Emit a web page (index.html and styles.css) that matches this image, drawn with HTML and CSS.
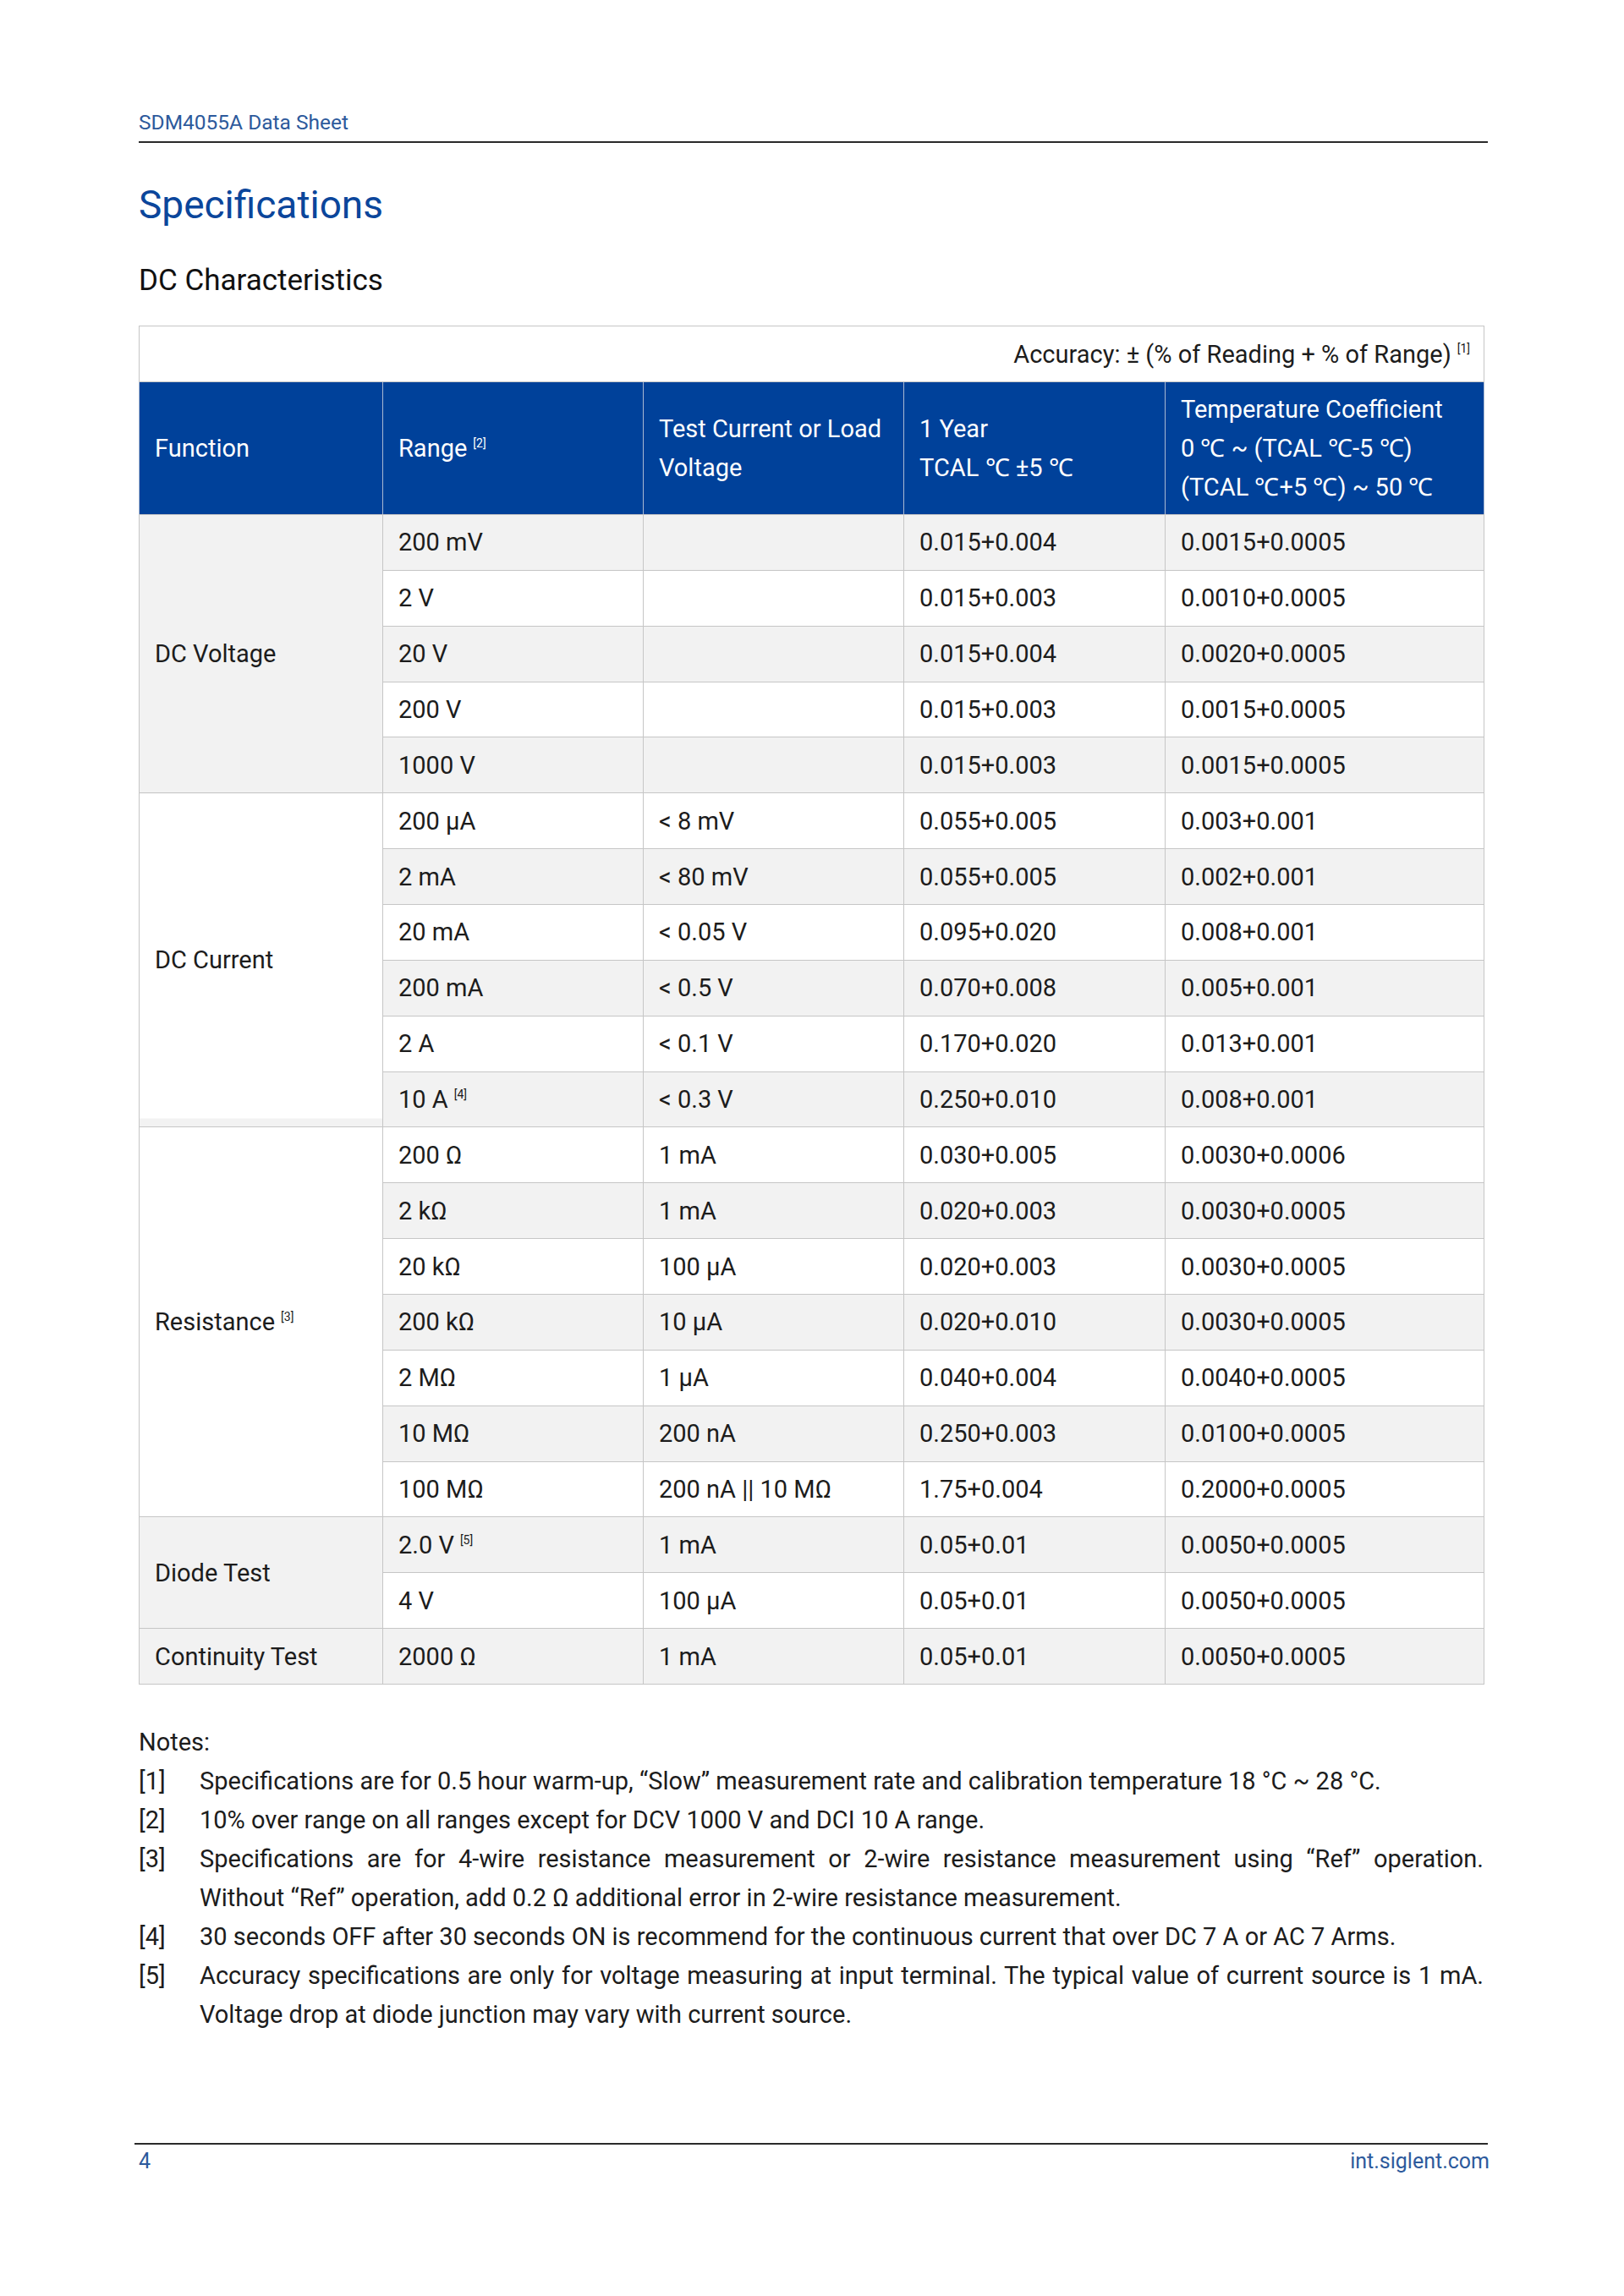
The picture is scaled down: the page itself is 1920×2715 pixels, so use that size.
FILE: index.html
```html
<!DOCTYPE html>
<html lang="en">
<head>
<meta charset="utf-8">
<title>SDM4055A Data Sheet - Specifications</title>
<link rel="stylesheet" href="styles.css">
</head>
<body>
<div class="page">
  <header class="running-head">
    <div class="running-title">SDM4055A Data Sheet</div>
    <div class="rule"></div>
  </header>

  <h1 class="title">Specifications</h1>
  <h2 class="subtitle">DC Characteristics</h2>

  <table class="spec">
    <colgroup>
      <col class="c1"><col class="c2"><col class="c3"><col class="c4"><col class="c5">
    </colgroup>
    <thead>
      <tr class="acc"><td colspan="5">Accuracy: ± (% of Reading + % of Range)<sup>[1]</sup></td></tr>
      <tr class="head">
        <th>Function</th>
        <th>Range<sup>[2]</sup></th>
        <th>Test Current or Load<br>Voltage</th>
        <th>1 Year<br>TCAL ℃ ±5 ℃</th>
        <th>Temperature Coefficient<br>0 ℃ ~ (TCAL ℃-5 ℃)<br>(TCAL ℃+5 ℃) ~ 50 ℃</th>
      </tr>
    </thead>
    <tbody>
      <tr class="g"><td rowspan="5" class="fn g">DC Voltage</td><td>200 mV</td><td></td><td>0.015+0.004</td><td>0.0015+0.0005</td></tr>
      <tr><td>2 V</td><td></td><td>0.015+0.003</td><td>0.0010+0.0005</td></tr>
      <tr class="g"><td>20 V</td><td></td><td>0.015+0.004</td><td>0.0020+0.0005</td></tr>
      <tr><td>200 V</td><td></td><td>0.015+0.003</td><td>0.0015+0.0005</td></tr>
      <tr class="g"><td>1000 V</td><td></td><td>0.015+0.003</td><td>0.0015+0.0005</td></tr>

      <tr><td rowspan="6" class="fn w strip">DC Current</td><td>200 µA</td><td>&lt; 8 mV</td><td>0.055+0.005</td><td>0.003+0.001</td></tr>
      <tr class="g"><td>2 mA</td><td>&lt; 80 mV</td><td>0.055+0.005</td><td>0.002+0.001</td></tr>
      <tr><td>20 mA</td><td>&lt; 0.05 V</td><td>0.095+0.020</td><td>0.008+0.001</td></tr>
      <tr class="g"><td>200 mA</td><td>&lt; 0.5 V</td><td>0.070+0.008</td><td>0.005+0.001</td></tr>
      <tr><td>2 A</td><td>&lt; 0.1 V</td><td>0.170+0.020</td><td>0.013+0.001</td></tr>
      <tr class="g"><td>10 A<sup>[4]</sup></td><td>&lt; 0.3 V</td><td>0.250+0.010</td><td>0.008+0.001</td></tr>

      <tr><td rowspan="7" class="fn w">Resistance<sup>[3]</sup></td><td>200 Ω</td><td>1 mA</td><td>0.030+0.005</td><td>0.0030+0.0006</td></tr>
      <tr class="g"><td>2 kΩ</td><td>1 mA</td><td>0.020+0.003</td><td>0.0030+0.0005</td></tr>
      <tr><td>20 kΩ</td><td>100 µA</td><td>0.020+0.003</td><td>0.0030+0.0005</td></tr>
      <tr class="g"><td>200 kΩ</td><td>10 µA</td><td>0.020+0.010</td><td>0.0030+0.0005</td></tr>
      <tr><td>2 MΩ</td><td>1 µA</td><td>0.040+0.004</td><td>0.0040+0.0005</td></tr>
      <tr class="g"><td>10 MΩ</td><td>200 nA</td><td>0.250+0.003</td><td>0.0100+0.0005</td></tr>
      <tr><td>100 MΩ</td><td>200 nA || 10 MΩ</td><td>1.75+0.004</td><td>0.2000+0.0005</td></tr>

      <tr class="g"><td rowspan="2" class="fn g">Diode Test</td><td>2.0 V<sup>[5]</sup></td><td>1 mA</td><td>0.05+0.01</td><td>0.0050+0.0005</td></tr>
      <tr><td>4 V</td><td>100 µA</td><td>0.05+0.01</td><td>0.0050+0.0005</td></tr>

      <tr class="g"><td class="fn g">Continuity Test</td><td>2000 Ω</td><td>1 mA</td><td>0.05+0.01</td><td>0.0050+0.0005</td></tr>
    </tbody>
  </table>

  <section class="notes">
    <div class="notes-title">Notes:</div>
    <div class="note">
      <span class="num">[1]</span>
      <div class="body"><div class="ln">Specifications are for 0.5 hour warm-up, “Slow” measurement rate and calibration temperature 18 °C ~ 28 °C.</div></div>
    </div>
    <div class="note">
      <span class="num">[2]</span>
      <div class="body"><div class="ln">10% over range on all ranges except for DCV 1000 V and DCI 10 A range.</div></div>
    </div>
    <div class="note">
      <span class="num">[3]</span>
      <div class="body">
        <div class="ln just">Specifications are for 4-wire resistance measurement or 2-wire resistance measurement using “Ref” operation.</div>
        <div class="ln">Without “Ref” operation, add 0.2 Ω additional error in 2-wire resistance measurement.</div>
      </div>
    </div>
    <div class="note">
      <span class="num">[4]</span>
      <div class="body"><div class="ln">30 seconds OFF after 30 seconds ON is recommend for the continuous current that over DC 7 A or AC 7 Arms.</div></div>
    </div>
    <div class="note">
      <span class="num">[5]</span>
      <div class="body">
        <div class="ln just">Accuracy specifications are only for voltage measuring at input terminal. The typical value of current source is 1 mA.</div>
        <div class="ln">Voltage drop at diode junction may vary with current source.</div>
      </div>
    </div>
  </section>

  <footer class="running-foot">
    <div class="rule foot-rule"></div>
    <div class="foot-row">
      <span class="page-no">4</span>
      <span class="site">int.siglent.com</span>
    </div>
  </footer>
</div>
</body>
</html>
```

FILE: styles.css
```css
html, body {
  margin: 0;
  padding: 0;
  background: #ffffff;
}

body {
  font-family: Roboto, "Liberation Sans", sans-serif;
  color: #1c1c1c;
}

.page {
  width: 1920px;
  min-height: 2715px;
  box-sizing: border-box;
  padding: 131px 166px 0 164px;
}

/* running head */
.running-title {
  font-size: 24.5px;
  line-height: 28px;
  color: #2d5a9c;
  font-weight: 400;
}

.rule {
  height: 2px;
  background: #2a2a2a;
}

.running-head .rule {
  margin-top: 8px;
  margin-right: -5px;
}

.title {
  margin: 45px 0 0 0;
  font-size: 46px;
  line-height: 56px;
  font-weight: 400;
  color: #0b469b;
}

.subtitle {
  margin: 40px 0 0 0;
  font-size: 35px;
  line-height: 44px;
  font-weight: 400;
  color: #111111;
}

/* table */
.spec {
  margin-top: 31px;
  width: 1590px;
  border-collapse: collapse;
  table-layout: fixed;
  font-size: 29px;
  color: #1c1c1c;
}

.c1 { width: 288px; }
.c2 { width: 308px; }
.c3 { width: 308px; }
.c4 { width: 309px; }
.c5 { width: 377px; }

.spec td, .spec th {
  border: 1px solid #c6c6c6;
  padding: 0 8px 0 18px;
  text-align: left;
  vertical-align: middle;
  font-weight: 400;
  line-height: 46px;
  white-space: nowrap;
}

.spec tr.acc td {
  height: 65px;
  text-align: right;
  padding-right: 16px;
  background: #ffffff;
}

.spec tr.head th {
  height: 156px;
  background: #00419a;
  color: #ffffff;
  border-color: #a9b8d2;
  border-top-color: #c6c6c6;
  border-bottom-color: #c6c6c6;
  padding-left: 18px;
}

.spec tbody td {
  height: 64.86px;
  background: #ffffff;
}

.spec tbody tr.g td {
  background: #f2f2f2;
}

.spec tbody td.fn.w {
  background: #ffffff;
}

.spec tbody td.fn.g {
  background: #f2f2f2;
}

.spec tbody td.fn.strip {
  background: linear-gradient(to bottom, #ffffff calc(100% - 10px), #f2f2f2 calc(100% - 10px));
}

.spec sup {
  font-size: 14px;
  line-height: 0;
  vertical-align: 0.8em;
  margin-left: 7px;
}

/* notes */
.notes {
  margin-top: 45px;
  font-size: 29px;
  line-height: 46px;
  color: #1c1c1c;
}

.note {
  display: flex;
}

.note .num {
  flex: 0 0 72px;
}

.note .body {
  flex: 1 1 auto;
}

.ln.just {
  text-align: justify;
  text-align-last: justify;
}

/* footer */
.running-foot {
  margin-top: 129px;
  margin-left: -5px;
}

.foot-rule {
  width: 1600px;
}

.foot-row {
  display: flex;
  justify-content: space-between;
  margin-top: 5px;
  padding-left: 5px;
  width: 1597px;
  font-size: 25px;
  line-height: 29px;
  color: #2d5a9c;
}
```
